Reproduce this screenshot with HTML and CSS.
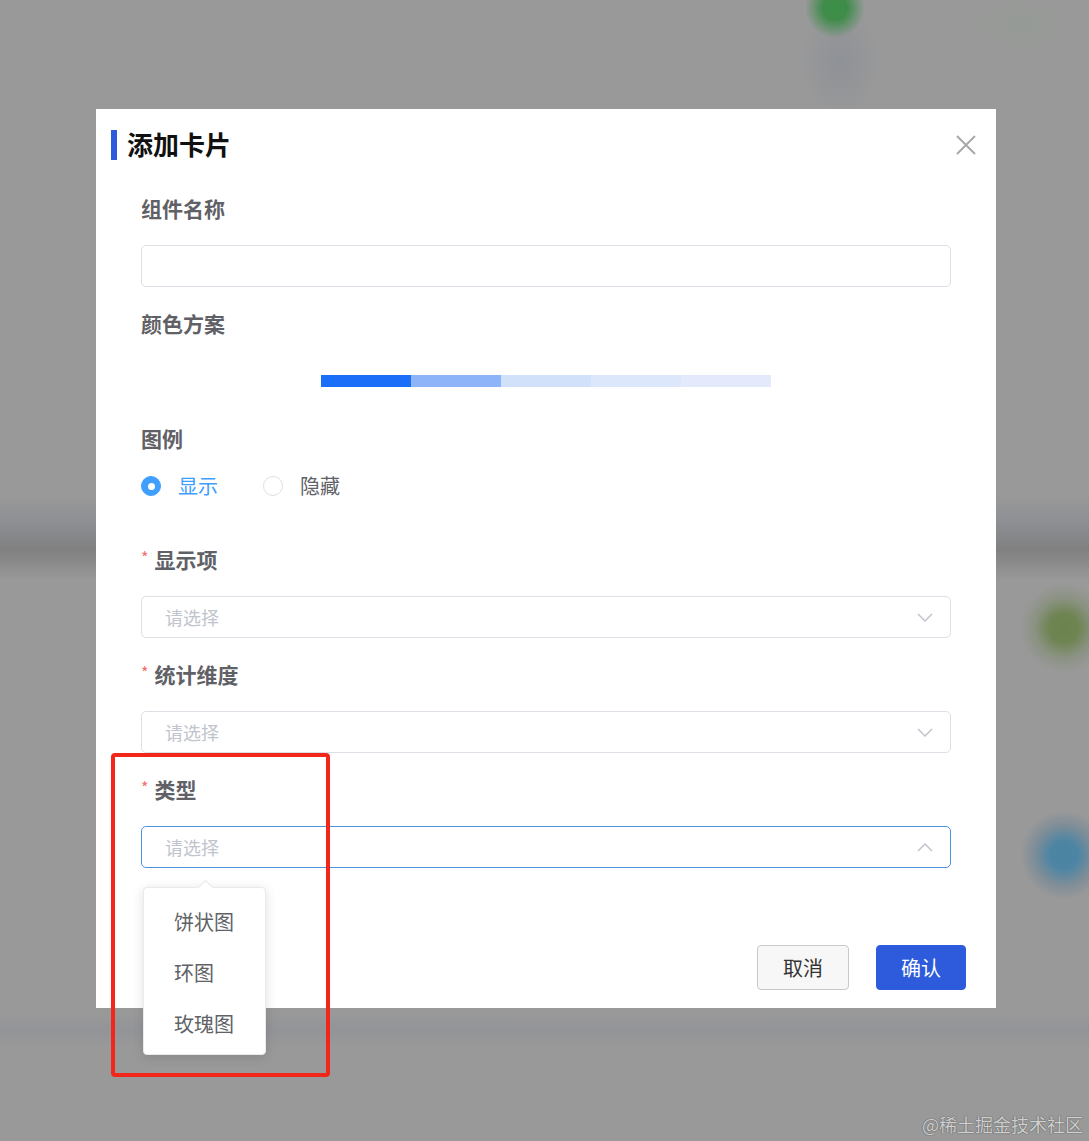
FILE: index.html
```html
<!DOCTYPE html>
<html lang="zh-CN">
<head>
<meta charset="utf-8">
<title>添加卡片</title>
<link rel="stylesheet" href="styles.css">
</head>
<body>
  <div class="dialog">
    <div class="dialog-header">
      <div class="title"><span class="title-bar"></span><span class="title-text">添加卡片</span></div>
      <svg class="close" width="20" height="20" viewBox="0 0 20 20"><path d="M1 1 L19 19 M19 1 L1 19" stroke="#a8a8a8" stroke-width="2" fill="none"/></svg>
    </div>
    <div class="dialog-body">
      <div class="form-item">
        <div class="label">组件名称</div>
        <div class="input"></div>
      </div>
      <div class="form-item">
        <div class="label">颜色方案</div>
        <div class="color-ctrl">
          <div class="color-bar">
            <span class="seg s1"></span><span class="seg s2"></span><span class="seg s3"></span><span class="seg s4"></span><span class="seg s5"></span>
          </div>
        </div>
      </div>
      <div class="form-item">
        <div class="label">图例</div>
        <div class="radio-group">
          <div class="radio checked"><span class="radio-dot"></span><span class="radio-text">显示</span></div>
          <div class="radio"><span class="radio-dot"></span><span class="radio-text">隐藏</span></div>
        </div>
      </div>
      <div class="form-item">
        <div class="label"><span class="req">*</span>显示项</div>
        <div class="select">
          <span class="placeholder">请选择</span>
          <svg class="arrow" width="16" height="9" viewBox="0 0 16 9"><path d="M1 1 L8 8 L15 1" stroke="#c0c4cc" stroke-width="1.5" fill="none"/></svg>
        </div>
      </div>
      <div class="form-item">
        <div class="label"><span class="req">*</span>统计维度</div>
        <div class="select">
          <span class="placeholder">请选择</span>
          <svg class="arrow" width="16" height="9" viewBox="0 0 16 9"><path d="M1 1 L8 8 L15 1" stroke="#c0c4cc" stroke-width="1.5" fill="none"/></svg>
        </div>
      </div>
      <div class="form-item">
        <div class="label"><span class="req">*</span>类型</div>
        <div class="select focused">
          <span class="placeholder">请选择</span>
          <svg class="arrow" width="16" height="9" viewBox="0 0 16 9"><path d="M1 8 L8 1 L15 8" stroke="#c0c4cc" stroke-width="1.5" fill="none"/></svg>
          <div class="dropdown">
            <span class="caret"></span>
            <div class="option">饼状图</div>
            <div class="option">环图</div>
            <div class="option">玫瑰图</div>
          </div>
        </div>
      </div>
    </div>
    <div class="dialog-footer">
      <button class="btn btn-cancel">取消</button>
      <button class="btn btn-primary">确认</button>
    </div>
  </div>
  <div class="annotation"></div>
  <div class="watermark">@稀土掘金技术社区</div>
</body>
</html>
```

FILE: styles.css
```css
html, body {
  margin: 0;
  padding: 0;
}
body {
  position: relative;
  min-height: 1141px;
  overflow: hidden;
  font-family: "Noto Sans CJK SC", "Noto Sans", sans-serif;
  background-color: #999999;
  background-image:
    radial-gradient(circle at 835px 8px, #3b8f47 0, #3f8c4a 12px, rgba(80,140,85,0) 30px),
    radial-gradient(ellipse 36px 50px at 840px 62px, rgba(138,142,150,0.7) 0, rgba(138,142,150,0) 40px),
    radial-gradient(ellipse 60px 30px at 1020px 25px, rgba(145,155,145,0.5) 0, rgba(145,155,145,0) 60px),
    radial-gradient(circle at 1064px 628px, #6b814e 0, #6e8451 14px, rgba(125,140,110,0.5) 30px, rgba(150,150,150,0) 44px),
    radial-gradient(circle at 1064px 855px, #4a84a3 0, #4d85a3 14px, rgba(100,130,150,0.5) 30px, rgba(150,150,150,0) 44px),
    linear-gradient(to bottom, rgba(140,142,148,0) 495px, rgba(136,138,146,0.6) 520px, rgba(122,122,122,0.8) 550px, rgba(145,145,145,0) 580px),
    linear-gradient(to bottom, rgba(145,145,150,0) 1012px, rgba(140,142,150,0.45) 1030px, rgba(145,145,150,0) 1048px);
}

.dialog {
  margin: 109px 0 0 96px;
  width: 900px;
  height: 899px;
  background: #ffffff;
  display: flex;
  flex-direction: column;
}

.dialog-header {
  display: flex;
  justify-content: space-between;
  align-items: center;
  padding: 21px 20px 0 15px;
  height: 30px;
}
.title {
  display: flex;
  align-items: center;
}
.title-bar {
  width: 6px;
  height: 30px;
  background: #2d5bdb;
  margin-right: 10px;
}
.title-text {
  font-size: 26px;
  font-weight: 700;
  color: #111111;
  line-height: 30px;
  position: relative;
  top: -1px;
}
.close {
  display: block;
}

.dialog-body {
  padding: 36px 45px 0 45px;
}
.form-item {
  margin-bottom: 24px;
}
.label {
  font-size: 21px;
  line-height: 24px;
  font-weight: 700;
  color: #5f6166;
  margin-bottom: 25px;
  display: flex;
  align-items: center;
}
.req {
  color: #f56c6c;
  font-size: 16px;
  font-weight: 400;
  margin-right: 6px;
  position: relative;
  top: -2px;
}

.input {
  height: 42px;
  box-sizing: border-box;
  border: 1px solid #dcdfe6;
  border-radius: 5px;
}

.color-ctrl {
  height: 42px;
  display: flex;
  align-items: center;
  justify-content: center;
}
.color-bar {
  display: flex;
  width: 450px;
  height: 12px;
}
.seg {
  flex: 1;
}
.s1 { background: #1b6ef8; }
.s2 { background: #8db3f8; }
.s3 { background: #d2e1fa; }
.s4 { background: #dde7fb; }
.s5 { background: #e4eafb; }

.radio-group {
  height: 48px;
  display: flex;
  align-items: flex-start;
}
.radio {
  display: flex;
  align-items: center;
  height: 22px;
  margin-right: 45px;
}
.radio-dot {
  width: 20px;
  height: 20px;
  box-sizing: border-box;
  border-radius: 50%;
  border: 1px solid #dcdfe6;
  background: #fff;
  margin-right: 17px;
  position: relative;
}
.radio.checked .radio-dot {
  background: #409eff;
  border-color: #409eff;
}
.radio.checked .radio-dot::after {
  content: "";
  position: absolute;
  left: 50%;
  top: 50%;
  width: 7px;
  height: 7px;
  margin: -3.5px 0 0 -3.5px;
  border-radius: 50%;
  background: #fff;
}
.radio-text {
  font-size: 20px;
  line-height: 22px;
  color: #606266;
}
.radio.checked .radio-text {
  color: #409eff;
}

.select {
  position: relative;
  height: 42px;
  box-sizing: border-box;
  border: 1px solid #dcdfe6;
  border-radius: 5px;
  display: flex;
  align-items: center;
  justify-content: space-between;
  padding: 0 17px 0 23px;
}
.select.focused {
  border-color: #4a93e0;
}
.placeholder {
  font-size: 18px;
  color: #c0c4cc;
}
.arrow {
  display: block;
}

.dropdown {
  position: absolute;
  left: 1px;
  top: 60px;
  width: 123px;
  box-sizing: border-box;
  padding: 8px 0 5px;
  background: #fff;
  border: 1px solid #e8eaee;
  border-radius: 4px;
  box-shadow: 0 2px 12px rgba(0, 0, 0, 0.12);
  z-index: 5;
}
.caret {
  position: absolute;
  left: 56px;
  top: -6px;
  width: 10px;
  height: 10px;
  background: #fff;
  border-left: 1px solid #e8eaee;
  border-top: 1px solid #e8eaee;
  transform: rotate(45deg);
}
.option {
  height: 51px;
  line-height: 51px;
  padding-left: 30px;
  font-size: 20px;
  color: #606266;
}

.dialog-footer {
  margin-top: auto;
  padding: 0 30px 18px 0;
  display: flex;
  justify-content: flex-end;
  gap: 27px;
}
.btn {
  height: 45px;
  border-radius: 4px;
  font-family: "Noto Sans CJK SC", "Noto Sans", sans-serif;
  font-size: 20px;
  cursor: pointer;
  padding: 0;
}
.btn-cancel {
  width: 92px;
  background: #f7f7f7;
  border: 1px solid #c9c9c9;
  color: #333333;
}
.btn-primary {
  width: 90px;
  background: #2d5bdb;
  border: 1px solid #2d5bdb;
  color: #ffffff;
}

.annotation {
  position: absolute;
  left: 111px;
  top: 753px;
  width: 219px;
  height: 324px;
  box-sizing: border-box;
  border: 4px solid #f3261c;
  border-radius: 4px;
  z-index: 10;
}

.watermark {
  position: absolute;
  right: 6px;
  bottom: 5px;
  font-size: 18px;
  line-height: 24px;
  color: rgba(230, 230, 230, 0.85);
  text-shadow: 0 0 1px #555, 0 0 1px #555;
}
```
